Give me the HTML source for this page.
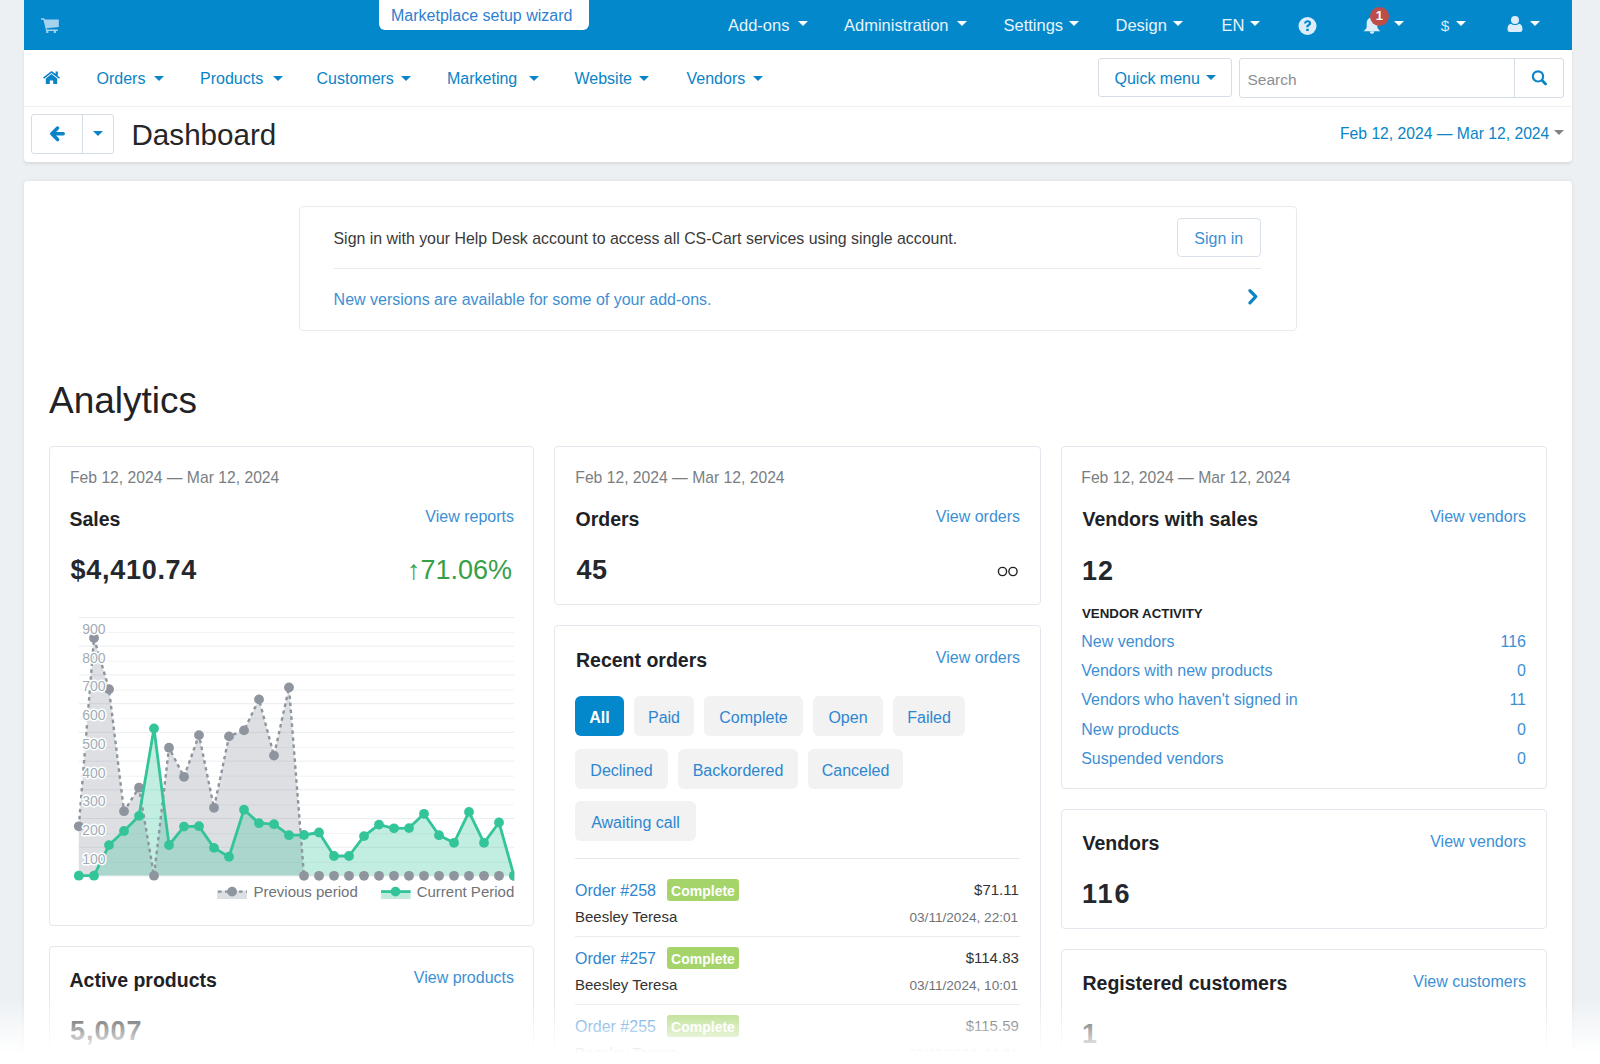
<!DOCTYPE html>
<html><head><meta charset="utf-8">
<style>
*{box-sizing:border-box;margin:0;padding:0}
html,body{width:1600px;height:1064px;overflow:hidden}
body{background:#ecf0f3;font-family:"Liberation Sans",sans-serif;position:relative;color:#222}
.a{position:absolute}
.t{position:absolute;line-height:1;white-space:nowrap}
.r{text-align:right}
.blue{color:#0a84c6}
.lnk{color:#3d8fd4}
.caret{position:absolute;width:0;height:0;border-left:5px solid transparent;border-right:5px solid transparent;border-top:5px solid #fff}
#topbar{left:24px;top:0;width:1548px;height:50px;background:#0388cc}
#panel1{left:24px;top:50px;width:1548px;height:112px;background:#fff;border-radius:0 0 4px 4px;box-shadow:0 2px 3px rgba(0,0,0,.09)}
#main{left:24px;top:181px;width:1548px;height:900px;background:#fff;border-radius:4px;box-shadow:0 0 4px rgba(0,0,0,.08)}
.card{position:absolute;border:1px solid #e3e8ee;border-radius:4px;background:#fff}
.nav2{font-size:16px;color:#0a84c6}
.top{font-size:16.5px;color:#e8f4fb}
.c2{border-top-color:#0a84c6}
.date{font-size:15.7px;color:#7a7e83}
.h{font-size:19.5px;font-weight:700;color:#1e2226}
.num{font-size:27px;font-weight:700;color:#24282c}
.vl{font-size:16px;color:#3d8fd4}
.tab{position:absolute;height:40px;border-radius:6px;background:#f2f2f3;color:#2d86d0;font-size:16px;line-height:44px;text-align:center}
</style></head><body>

<!-- top bar -->
<div id="topbar" class="a"></div>
<svg class="a" style="left:41px;top:18px" width="19" height="16" viewBox="0 0 19 16"><path fill="#a5d2ef" d="M0 0.2h3.3l0.6 1.4H17.8v7.4L5.6 10.3l0.3 1.3H16.8v1.5H15v1.9h-2.2v-1.9H7.4v1.9H5.2v-1.9L2.4 1.7H0z"/></svg>
<div class="a" style="left:379px;top:-5px;width:210px;height:35px;background:#fff;border-radius:6px"></div>
<div class="t" style="left:391px;top:7.7px;font-size:16px;color:#2f80d1">Marketplace setup wizard</div>

<div class="t top" style="left:728px;top:16.9px">Add-ons</div><div class="caret" style="left:797.5px;top:21px"></div>
<div class="t top" style="left:844px;top:16.9px">Administration</div><div class="caret" style="left:957px;top:21px"></div>
<div class="t top" style="left:1003.5px;top:16.9px">Settings</div><div class="caret" style="left:1068.5px;top:21px"></div>
<div class="t top" style="left:1115.5px;top:16.9px">Design</div><div class="caret" style="left:1172.5px;top:21px"></div>
<div class="t top" style="left:1221.5px;top:16.9px">EN</div><div class="caret" style="left:1249.5px;top:21px"></div>

<svg class="a" style="left:1298px;top:17px" width="19" height="18" viewBox="0 0 19 18"><circle cx="9.5" cy="9" r="9" fill="#dcedf9"/><path fill="#0388cc" d="M6 6.6c0-2 1.6-3.3 3.6-3.3s3.5 1.2 3.5 3c0 1.8-1.4 2.3-2.2 2.9-.4.3-.3.7-.3 1.1H8.3c0-.9 0-1.6.7-2.3.7-.6 1.8-.9 1.8-1.7 0-.6-.5-1-1.2-1-.8 0-1.3.5-1.4 1.3zM8.2 11.7h2.5v2.4H8.2z"/></svg>
<svg class="a" style="left:1362px;top:16px" width="20" height="19" viewBox="0 0 20 19"><path fill="#dcedf9" d="M10 1.5c3.5 0 5.3 2.6 5.3 5.6v3.6c0 1.5 1.5 3 3.2 4.5H1.5C3.2 13.7 4.7 12.2 4.7 10.7V7.1c0-3 1.8-5.6 5.3-5.6zM7.8 15.6h4.4c0 1.3-1 2.3-2.2 2.3s-2.2-1-2.2-2.3z"/></svg>
<div class="a" style="left:1369.5px;top:6.5px;width:19.5px;height:19.5px;border-radius:50%;background:#bf4c47"></div>
<div class="t" style="left:1369.5px;top:8.5px;width:19.5px;text-align:center;font-size:13px;font-weight:700;color:#fff">1</div>
<div class="caret" style="left:1393.5px;top:21px"></div>
<div class="t" style="left:1440.8px;top:17.6px;font-size:15.5px;color:#d6eaf8">$</div><div class="caret" style="left:1456px;top:21px"></div>
<svg class="a" style="left:1507px;top:16.3px" width="16" height="16" viewBox="0 0 16 16"><circle cx="8" cy="4" r="4" fill="#dcedf9"/><path fill="#dcedf9" d="M0.5 13.5c0-4 1.5-5.5 3.5-5.8 1 .8 2.4 1.3 4 1.3s3-.5 4-1.3c2 .3 3.5 1.8 3.5 5.8 0 1.5-1 2.5-2.3 2.5H2.8C1.5 16 .5 15 .5 13.5z"/></svg>
<div class="caret" style="left:1530px;top:21px"></div>

<!-- second panel -->
<div id="panel1" class="a"></div>
<div class="a" style="left:24px;top:106px;width:1548px;height:1px;background:#eef0f2"></div>
<svg class="a" style="left:43px;top:71px" width="17" height="13" viewBox="0 0 17 13"><path fill="#0a84c6" d="M8.5 0L0 6.6l1 1.1L8.5 2l7.5 5.7 1-1.1-2.2-1.7V0.5h-2.2v2.2zM2.8 7.4V13h4v-3.6h3.4V13h4V7.4L8.5 3z"/></svg>
<div class="t nav2" style="left:96.5px;top:70.5px">Orders</div><div class="caret c2" style="left:153.5px;top:76px"></div>
<div class="t nav2" style="left:200px;top:70.5px">Products</div><div class="caret c2" style="left:273px;top:76px"></div>
<div class="t nav2" style="left:316.5px;top:70.5px">Customers</div><div class="caret c2" style="left:400.5px;top:76px"></div>
<div class="t nav2" style="left:447px;top:70.5px">Marketing</div><div class="caret c2" style="left:529px;top:76px"></div>
<div class="t nav2" style="left:574.5px;top:70.5px">Website</div><div class="caret c2" style="left:639px;top:76px"></div>
<div class="t nav2" style="left:686.5px;top:70.5px">Vendors</div><div class="caret c2" style="left:752.5px;top:76px"></div>

<div class="a" style="left:1098px;top:58px;width:134px;height:39px;border:1px solid #d6dde5;border-radius:3px"></div>
<div class="t nav2" style="left:1114.5px;top:70.7px">Quick menu</div><div class="caret c2" style="left:1206px;top:75px"></div>
<div class="a" style="left:1239px;top:58px;width:325px;height:40px;border:1px solid #d6dde5;border-radius:3px"></div>
<div class="a" style="left:1514px;top:59px;width:1px;height:38px;background:#d6dde5"></div>
<div class="t" style="left:1247.5px;top:72px;font-size:15.5px;color:#8a8f94">Search</div>
<svg class="a" style="left:1531px;top:69px" width="17" height="18" viewBox="0 0 17 18"><circle cx="7" cy="7.4" r="5.1" fill="none" stroke="#0a84c6" stroke-width="2.2"/><path d="M11 11.3l3.6 3.6" stroke="#0a84c6" stroke-width="2.8" stroke-linecap="round"/></svg>

<!-- title row -->
<div class="a" style="left:31px;top:114px;width:83px;height:40px;border:1px solid #d6dde5;border-radius:3px"></div>
<div class="a" style="left:82px;top:115px;width:1px;height:38px;background:#d6dde5"></div>
<svg class="a" style="left:44px;top:120px" width="26" height="28" viewBox="44 120 26 28"><path d="M57.6 128L51.8 133.8L57.6 139.6M52.5 133.8H63.2" fill="none" stroke="#0a84c6" stroke-width="3.5" stroke-linecap="round" stroke-linejoin="round"/></svg>
<div class="caret c2" style="left:93px;top:131px"></div>
<div class="t" style="left:131.5px;top:120px;font-size:29.6px;color:#262626">Dashboard</div>
<div class="t" style="left:1340px;top:125.6px;font-size:15.7px;color:#0a84c6">Feb 12, 2024 — Mar 12, 2024</div>
<div class="caret" style="left:1554px;top:130px;border-top-color:#808488"></div>

<!-- main panel -->
<div id="main" class="a"></div>

<!-- notice -->
<div class="a" style="left:299px;top:206px;width:998px;height:125px;border:1px solid #e6ebf0;border-radius:4px"></div>
<div class="t" style="left:333.5px;top:231.2px;font-size:15.9px;color:#3a3a3a">Sign in with your Help Desk account to access all CS-Cart services using single account.</div>
<div class="a" style="left:1177px;top:218px;width:84px;height:39px;border:1px solid #dae0e7;border-radius:4px"></div>
<div class="t" style="left:1194.3px;top:231.2px;font-size:16px;color:#3d8fd4">Sign in</div>
<div class="a" style="left:334px;top:268px;width:927px;height:1px;background:#e6eaee"></div>
<div class="t" style="left:333.6px;top:292.1px;font-size:16px;color:#3d8fd4">New versions are available for some of your add-ons.</div>
<svg class="a" style="left:1240px;top:284px" width="24" height="26" viewBox="1240 284 24 26"><path d="M1249.9 290.6L1255.8 296.7L1249.9 302.8" fill="none" stroke="#0a84c6" stroke-width="3.2" stroke-linecap="round" stroke-linejoin="round"/></svg>

<div class="t" style="left:49px;top:382.2px;font-size:37px;color:#1f2327">Analytics</div>

<!-- cards -->
<div class="card" style="left:49px;top:446px;width:485px;height:480px"></div>
<div class="card" style="left:49px;top:946px;width:485px;height:200px"></div>
<div class="card" style="left:554px;top:446px;width:487px;height:159px"></div>
<div class="card" style="left:554px;top:625px;width:487px;height:500px"></div>
<div class="card" style="left:1061px;top:446px;width:486px;height:343px"></div>
<div class="card" style="left:1061px;top:809px;width:486px;height:120px"></div>
<div class="card" style="left:1061px;top:949px;width:486px;height:200px"></div>

<!-- sales card -->
<div class="t date" style="left:70px;top:470.2px">Feb 12, 2024 — Mar 12, 2024</div>
<div class="t h" style="left:69.5px;top:509.7px">Sales</div>
<div class="t vl r" style="right:1086px;top:508.5px">View reports</div>
<div class="t num" style="left:70.6px;top:557.4px;letter-spacing:0.7px">$4,410.74</div>
<div class="t r" style="right:1088px;top:557.3px;font-size:27px;color:#36a047">↑71.06%</div>
<svg class="a" style="left:0;top:0" width="1600" height="1064" viewBox="0 0 1600 1064">
<defs><clipPath id="cc"><rect x="70" y="600" width="444.2" height="290"/></clipPath></defs>
<rect x="78.7" y="617.00" width="435.5" height="1" fill="#eaedf0"/>
<rect x="78.7" y="645.72" width="435.5" height="1" fill="#eaedf0"/>
<rect x="78.7" y="674.44" width="435.5" height="1" fill="#eaedf0"/>
<rect x="78.7" y="703.16" width="435.5" height="1" fill="#eaedf0"/>
<rect x="78.7" y="731.88" width="435.5" height="1" fill="#eaedf0"/>
<rect x="78.7" y="760.60" width="435.5" height="1" fill="#eaedf0"/>
<rect x="78.7" y="789.32" width="435.5" height="1" fill="#eaedf0"/>
<rect x="78.7" y="818.04" width="435.5" height="1" fill="#eaedf0"/>
<rect x="78.7" y="846.76" width="435.5" height="1" fill="#eaedf0"/>
<rect x="78.7" y="875.48" width="435.5" height="1" fill="#eaedf0"/>
<rect x="78.7" y="632.10" width="435.5" height="1" fill="#f1f3f5"/>
<rect x="78.7" y="660.82" width="435.5" height="1" fill="#f1f3f5"/>
<rect x="78.7" y="689.54" width="435.5" height="1" fill="#f1f3f5"/>
<rect x="78.7" y="718.26" width="435.5" height="1" fill="#f1f3f5"/>
<rect x="78.7" y="746.98" width="435.5" height="1" fill="#f1f3f5"/>
<rect x="78.7" y="775.70" width="435.5" height="1" fill="#f1f3f5"/>
<rect x="78.7" y="804.42" width="435.5" height="1" fill="#f1f3f5"/>
<rect x="78.7" y="833.14" width="435.5" height="1" fill="#f1f3f5"/>
<rect x="78.7" y="861.86" width="435.5" height="1" fill="#f1f3f5"/>
<g clip-path="url(#cc)">
<polygon points="78.8,875.6 78.8,826.3 94.0,638.0 109.0,689.2 124.0,811.2 139.0,787.7 154.0,875.7 169.0,747.7 184.0,776.8 199.0,735.1 214.0,807.8 229.0,736.4 244.0,730.4 259.0,699.4 274.0,755.6 289.0,687.5 304.0,875.8 319.0,875.8 334.0,875.8 349.0,875.8 364.0,875.8 379.0,875.8 394.0,875.8 409.0,875.8 424.0,875.8 439.0,875.8 454.0,875.8 469.0,875.8 484.0,875.8 499.0,875.8 514.0,875.8 514.0,875.6" fill="rgba(142,149,158,0.30)"/>
<polygon points="78.8,875.6 78.8,875.7 94.0,875.7 109.0,845.1 124.0,831.0 139.0,815.9 154.0,728.5 169.0,845.0 184.0,826.6 199.0,826.2 214.0,847.9 229.0,856.7 244.0,809.7 259.0,823.2 274.0,824.2 289.0,835.2 304.0,835.0 319.0,832.5 334.0,856.0 349.0,856.0 364.0,836.1 379.0,824.6 394.0,828.3 409.0,828.1 424.0,813.8 439.0,835.2 454.0,842.8 469.0,811.9 484.0,842.8 499.0,822.5 514.0,875.8 514.0,875.6" fill="rgba(52,196,154,0.30)"/>
<polyline points="78.8,826.3 94.0,638.0 109.0,689.2 124.0,811.2 139.0,787.7 154.0,875.7 169.0,747.7 184.0,776.8 199.0,735.1 214.0,807.8 229.0,736.4 244.0,730.4 259.0,699.4 274.0,755.6 289.0,687.5 304.0,875.8" fill="none" stroke="#8e959e" stroke-width="2.4" stroke-dasharray="3.5 3.5"/>
<circle cx="78.8" cy="826.3" r="4.9" fill="#8e959e"/>
<circle cx="94.0" cy="638.0" r="4.9" fill="#8e959e"/>
<circle cx="109.0" cy="689.2" r="4.9" fill="#8e959e"/>
<circle cx="124.0" cy="811.2" r="4.9" fill="#8e959e"/>
<circle cx="139.0" cy="787.7" r="4.9" fill="#8e959e"/>
<circle cx="154.0" cy="875.7" r="4.9" fill="#8e959e"/>
<circle cx="169.0" cy="747.7" r="4.9" fill="#8e959e"/>
<circle cx="184.0" cy="776.8" r="4.9" fill="#8e959e"/>
<circle cx="199.0" cy="735.1" r="4.9" fill="#8e959e"/>
<circle cx="214.0" cy="807.8" r="4.9" fill="#8e959e"/>
<circle cx="229.0" cy="736.4" r="4.9" fill="#8e959e"/>
<circle cx="244.0" cy="730.4" r="4.9" fill="#8e959e"/>
<circle cx="259.0" cy="699.4" r="4.9" fill="#8e959e"/>
<circle cx="274.0" cy="755.6" r="4.9" fill="#8e959e"/>
<circle cx="289.0" cy="687.5" r="4.9" fill="#8e959e"/>
<circle cx="304.0" cy="875.8" r="4.9" fill="#8e959e"/>
<circle cx="319.0" cy="875.8" r="4.9" fill="#8e959e"/>
<circle cx="334.0" cy="875.8" r="4.9" fill="#8e959e"/>
<circle cx="349.0" cy="875.8" r="4.9" fill="#8e959e"/>
<circle cx="364.0" cy="875.8" r="4.9" fill="#8e959e"/>
<circle cx="379.0" cy="875.8" r="4.9" fill="#8e959e"/>
<circle cx="394.0" cy="875.8" r="4.9" fill="#8e959e"/>
<circle cx="409.0" cy="875.8" r="4.9" fill="#8e959e"/>
<circle cx="424.0" cy="875.8" r="4.9" fill="#8e959e"/>
<circle cx="439.0" cy="875.8" r="4.9" fill="#8e959e"/>
<circle cx="454.0" cy="875.8" r="4.9" fill="#8e959e"/>
<circle cx="469.0" cy="875.8" r="4.9" fill="#8e959e"/>
<circle cx="484.0" cy="875.8" r="4.9" fill="#8e959e"/>
<circle cx="499.0" cy="875.8" r="4.9" fill="#8e959e"/>
<circle cx="514.0" cy="875.8" r="4.9" fill="#8e959e"/>
<polyline points="78.8,875.7 94.0,875.7 109.0,845.1 124.0,831.0 139.0,815.9 154.0,728.5 169.0,845.0 184.0,826.6 199.0,826.2 214.0,847.9 229.0,856.7 244.0,809.7 259.0,823.2 274.0,824.2 289.0,835.2 304.0,835.0 319.0,832.5 334.0,856.0 349.0,856.0 364.0,836.1 379.0,824.6 394.0,828.3 409.0,828.1 424.0,813.8 439.0,835.2 454.0,842.8 469.0,811.9 484.0,842.8 499.0,822.5 514.0,875.8" fill="none" stroke="#34c49a" stroke-width="2.8" stroke-linejoin="round"/>
<circle cx="78.8" cy="875.7" r="4.9" fill="#34c49a"/>
<circle cx="94.0" cy="875.7" r="4.9" fill="#34c49a"/>
<circle cx="109.0" cy="845.1" r="4.9" fill="#34c49a"/>
<circle cx="124.0" cy="831.0" r="4.9" fill="#34c49a"/>
<circle cx="139.0" cy="815.9" r="4.9" fill="#34c49a"/>
<circle cx="154.0" cy="728.5" r="4.9" fill="#34c49a"/>
<circle cx="169.0" cy="845.0" r="4.9" fill="#34c49a"/>
<circle cx="184.0" cy="826.6" r="4.9" fill="#34c49a"/>
<circle cx="199.0" cy="826.2" r="4.9" fill="#34c49a"/>
<circle cx="214.0" cy="847.9" r="4.9" fill="#34c49a"/>
<circle cx="229.0" cy="856.7" r="4.9" fill="#34c49a"/>
<circle cx="244.0" cy="809.7" r="4.9" fill="#34c49a"/>
<circle cx="259.0" cy="823.2" r="4.9" fill="#34c49a"/>
<circle cx="274.0" cy="824.2" r="4.9" fill="#34c49a"/>
<circle cx="289.0" cy="835.2" r="4.9" fill="#34c49a"/>
<circle cx="304.0" cy="835.0" r="4.9" fill="#34c49a"/>
<circle cx="319.0" cy="832.5" r="4.9" fill="#34c49a"/>
<circle cx="334.0" cy="856.0" r="4.9" fill="#34c49a"/>
<circle cx="349.0" cy="856.0" r="4.9" fill="#34c49a"/>
<circle cx="364.0" cy="836.1" r="4.9" fill="#34c49a"/>
<circle cx="379.0" cy="824.6" r="4.9" fill="#34c49a"/>
<circle cx="394.0" cy="828.3" r="4.9" fill="#34c49a"/>
<circle cx="409.0" cy="828.1" r="4.9" fill="#34c49a"/>
<circle cx="424.0" cy="813.8" r="4.9" fill="#34c49a"/>
<circle cx="439.0" cy="835.2" r="4.9" fill="#34c49a"/>
<circle cx="454.0" cy="842.8" r="4.9" fill="#34c49a"/>
<circle cx="469.0" cy="811.9" r="4.9" fill="#34c49a"/>
<circle cx="484.0" cy="842.8" r="4.9" fill="#34c49a"/>
<circle cx="499.0" cy="822.5" r="4.9" fill="#34c49a"/>
<circle cx="514.0" cy="875.8" r="4.9" fill="#34c49a"/>
</g>
<text x="82.3" y="634.0" font-family="Liberation Sans" font-size="14" fill="#a3acb5" stroke="#fff" stroke-width="3" paint-order="stroke" stroke-linejoin="round">900</text>
<text x="82.3" y="662.7" font-family="Liberation Sans" font-size="14" fill="#a3acb5" stroke="#fff" stroke-width="3" paint-order="stroke" stroke-linejoin="round">800</text>
<text x="82.3" y="691.4" font-family="Liberation Sans" font-size="14" fill="#a3acb5" stroke="#fff" stroke-width="3" paint-order="stroke" stroke-linejoin="round">700</text>
<text x="82.3" y="720.2" font-family="Liberation Sans" font-size="14" fill="#a3acb5" stroke="#fff" stroke-width="3" paint-order="stroke" stroke-linejoin="round">600</text>
<text x="82.3" y="748.9" font-family="Liberation Sans" font-size="14" fill="#a3acb5" stroke="#fff" stroke-width="3" paint-order="stroke" stroke-linejoin="round">500</text>
<text x="82.3" y="777.6" font-family="Liberation Sans" font-size="14" fill="#a3acb5" stroke="#fff" stroke-width="3" paint-order="stroke" stroke-linejoin="round">400</text>
<text x="82.3" y="806.3" font-family="Liberation Sans" font-size="14" fill="#a3acb5" stroke="#fff" stroke-width="3" paint-order="stroke" stroke-linejoin="round">300</text>
<text x="82.3" y="835.0" font-family="Liberation Sans" font-size="14" fill="#a3acb5" stroke="#fff" stroke-width="3" paint-order="stroke" stroke-linejoin="round">200</text>
<text x="82.3" y="863.8" font-family="Liberation Sans" font-size="14" fill="#a3acb5" stroke="#fff" stroke-width="3" paint-order="stroke" stroke-linejoin="round">100</text>
<rect x="217" y="890.6" width="30" height="8.4" fill="#dcdfe3"/>
<line x1="217" y1="891.6" x2="247" y2="891.6" stroke="#8e959e" stroke-width="2.4" stroke-dasharray="3.5 3.5" stroke-dashoffset="-1"/>
<circle cx="232.1" cy="891.6" r="4.9" fill="#8e959e"/>
<text x="253.5" y="896.8" font-family="Liberation Sans" font-size="15" fill="#6f7378">Previous period</text>
<rect x="381" y="890.6" width="29.6" height="8.4" fill="#bfeadc"/>
<line x1="381" y1="891.6" x2="410.6" y2="891.6" stroke="#34c49a" stroke-width="2.8"/>
<circle cx="395.5" cy="891.6" r="4.9" fill="#34c49a"/>
<text x="416.7" y="896.8" font-family="Liberation Sans" font-size="15" fill="#6f7378">Current Period</text>
</svg>

<!-- active products -->
<div class="t h" style="left:69.5px;top:971.4px">Active products</div>
<div class="t vl r" style="right:1086px;top:970.4px">View products</div>
<div class="t num" style="left:70px;top:1017.9px;letter-spacing:1px">5,007</div>

<!-- orders card -->
<div class="t date" style="left:575.3px;top:470.2px">Feb 12, 2024 — Mar 12, 2024</div>
<div class="t h" style="left:575.5px;top:509.7px">Orders</div>
<div class="t vl r" style="right:580px;top:508.6px">View orders</div>
<div class="t num" style="left:576.5px;top:557.4px;letter-spacing:0.6px">45</div>
<svg class="a" style="left:995px;top:564px" width="24" height="15" viewBox="0 0 24 15"><circle cx="7.5" cy="7.5" r="4.1" fill="none" stroke="#222" stroke-width="1.4"/><circle cx="18" cy="7.5" r="4.1" fill="none" stroke="#222" stroke-width="1.4"/></svg>

<!-- recent orders -->
<div class="t h" style="left:576px;top:650.7px">Recent orders</div>
<div class="t vl r" style="right:580px;top:649.7px">View orders</div>
<div class="tab" style="left:575px;top:696px;width:49px;background:#0388cc;color:#fff;font-weight:700;font-size:16px">All</div>
<div class="tab" style="left:634px;top:696px;width:60px">Paid</div>
<div class="tab" style="left:704px;top:696px;width:99px">Complete</div>
<div class="tab" style="left:813px;top:696px;width:70px">Open</div>
<div class="tab" style="left:893px;top:696px;width:72px">Failed</div>
<div class="tab" style="left:575px;top:749px;width:93px">Declined</div>
<div class="tab" style="left:678px;top:749px;width:120px">Backordered</div>
<div class="tab" style="left:808px;top:749px;width:95px">Canceled</div>
<div class="tab" style="left:575px;top:801px;width:121px">Awaiting call</div>
<div class="a" style="left:575px;top:858px;width:445px;height:1px;background:#e3e8ee"></div>

<div class="t" style="left:575px;top:883.3px;font-size:16px;color:#2d86d0">Order #258</div>
<div class="a" style="left:667px;top:879px;width:72px;height:22px;border-radius:3px;background:#a5d46a"></div>
<div class="t" style="left:667px;top:883.5px;width:72px;text-align:center;font-size:14px;font-weight:700;color:#fff">Complete</div>
<div class="t r" style="right:581.2px;top:881.5px;font-size:15px;color:#333">$71.11</div>
<div class="t" style="left:575px;top:908.5px;font-size:15px;color:#333">Beesley Teresa</div>
<div class="t r" style="right:581.9px;top:911.4px;font-size:13.6px;color:#6f7378">03/11/2024, 22:01</div>
<div class="a" style="left:575px;top:936px;width:445px;height:1px;background:#e8ecef"></div>

<div class="t" style="left:575px;top:951.0px;font-size:16px;color:#2d86d0">Order #257</div>
<div class="a" style="left:667px;top:947px;width:72px;height:22px;border-radius:3px;background:#a5d46a"></div>
<div class="t" style="left:667px;top:951.5px;width:72px;text-align:center;font-size:14px;font-weight:700;color:#fff">Complete</div>
<div class="t r" style="right:581.2px;top:949.5px;font-size:15px;color:#333">$114.83</div>
<div class="t" style="left:575px;top:976.5px;font-size:15px;color:#333">Beesley Teresa</div>
<div class="t r" style="right:581.9px;top:979.4px;font-size:13.6px;color:#6f7378">03/11/2024, 10:01</div>
<div class="a" style="left:575px;top:1004px;width:445px;height:1px;background:#e8ecef"></div>

<div class="t" style="left:575px;top:1019.0px;font-size:16px;color:#2d86d0">Order #255</div>
<div class="a" style="left:667px;top:1015px;width:72px;height:22px;border-radius:3px;background:#a5d46a"></div>
<div class="t" style="left:667px;top:1019.5px;width:72px;text-align:center;font-size:14px;font-weight:700;color:#fff">Complete</div>
<div class="t r" style="right:581.2px;top:1017.5px;font-size:15px;color:#333">$115.59</div>
<div class="t" style="left:575px;top:1044.5px;font-size:15px;color:#333">Beesley Teresa</div>
<div class="t r" style="right:581.9px;top:1047.4px;font-size:13.6px;color:#6f7378">03/10/2024, 10:01</div>

<!-- vendors with sales -->
<div class="t date" style="left:1081.3px;top:470.2px">Feb 12, 2024 — Mar 12, 2024</div>
<div class="t h" style="left:1082.5px;top:510.1px">Vendors with sales</div>
<div class="t vl r" style="right:74px;top:508.5px">View vendors</div>
<div class="t num" style="left:1082px;top:557.5px;letter-spacing:1px">12</div>
<div class="t" style="left:1082px;top:606.8px;font-size:13.3px;font-weight:700;color:#1e2226">VENDOR ACTIVITY</div>
<div class="t vl" style="left:1081.2px;top:633.6px">New vendors</div><div class="t vl r" style="right:74px;top:633.6px">116</div>
<div class="t vl" style="left:1081.2px;top:663.3px">Vendors with new products</div><div class="t vl r" style="right:74px;top:663.3px">0</div>
<div class="t vl" style="left:1081.2px;top:692.2px">Vendors who haven't signed in</div><div class="t vl r" style="right:74px;top:692.2px">11</div>
<div class="t vl" style="left:1081.2px;top:721.9px">New products</div><div class="t vl r" style="right:74px;top:721.9px">0</div>
<div class="t vl" style="left:1081.2px;top:750.8px">Suspended vendors</div><div class="t vl r" style="right:74px;top:750.8px">0</div>

<!-- vendors -->
<div class="t h" style="left:1082.5px;top:834.3px">Vendors</div>
<div class="t vl r" style="right:74px;top:833.7px">View vendors</div>
<div class="t num" style="left:1082px;top:880.9px;letter-spacing:2px">116</div>

<!-- registered customers -->
<div class="t h" style="left:1082.5px;top:974.3px">Registered customers</div>
<div class="t vl r" style="right:74px;top:973.7px">View customers</div>
<div class="t num" style="left:1082px;top:1020.9px">1</div>

<!-- bottom fade -->
<div class="a" style="left:0;top:996px;width:1600px;height:68px;background:linear-gradient(to bottom,rgba(255,255,255,0) 0%,rgba(255,255,255,.55) 45%,rgba(255,255,255,1) 84%,#fff 100%)"></div>

</body></html>
